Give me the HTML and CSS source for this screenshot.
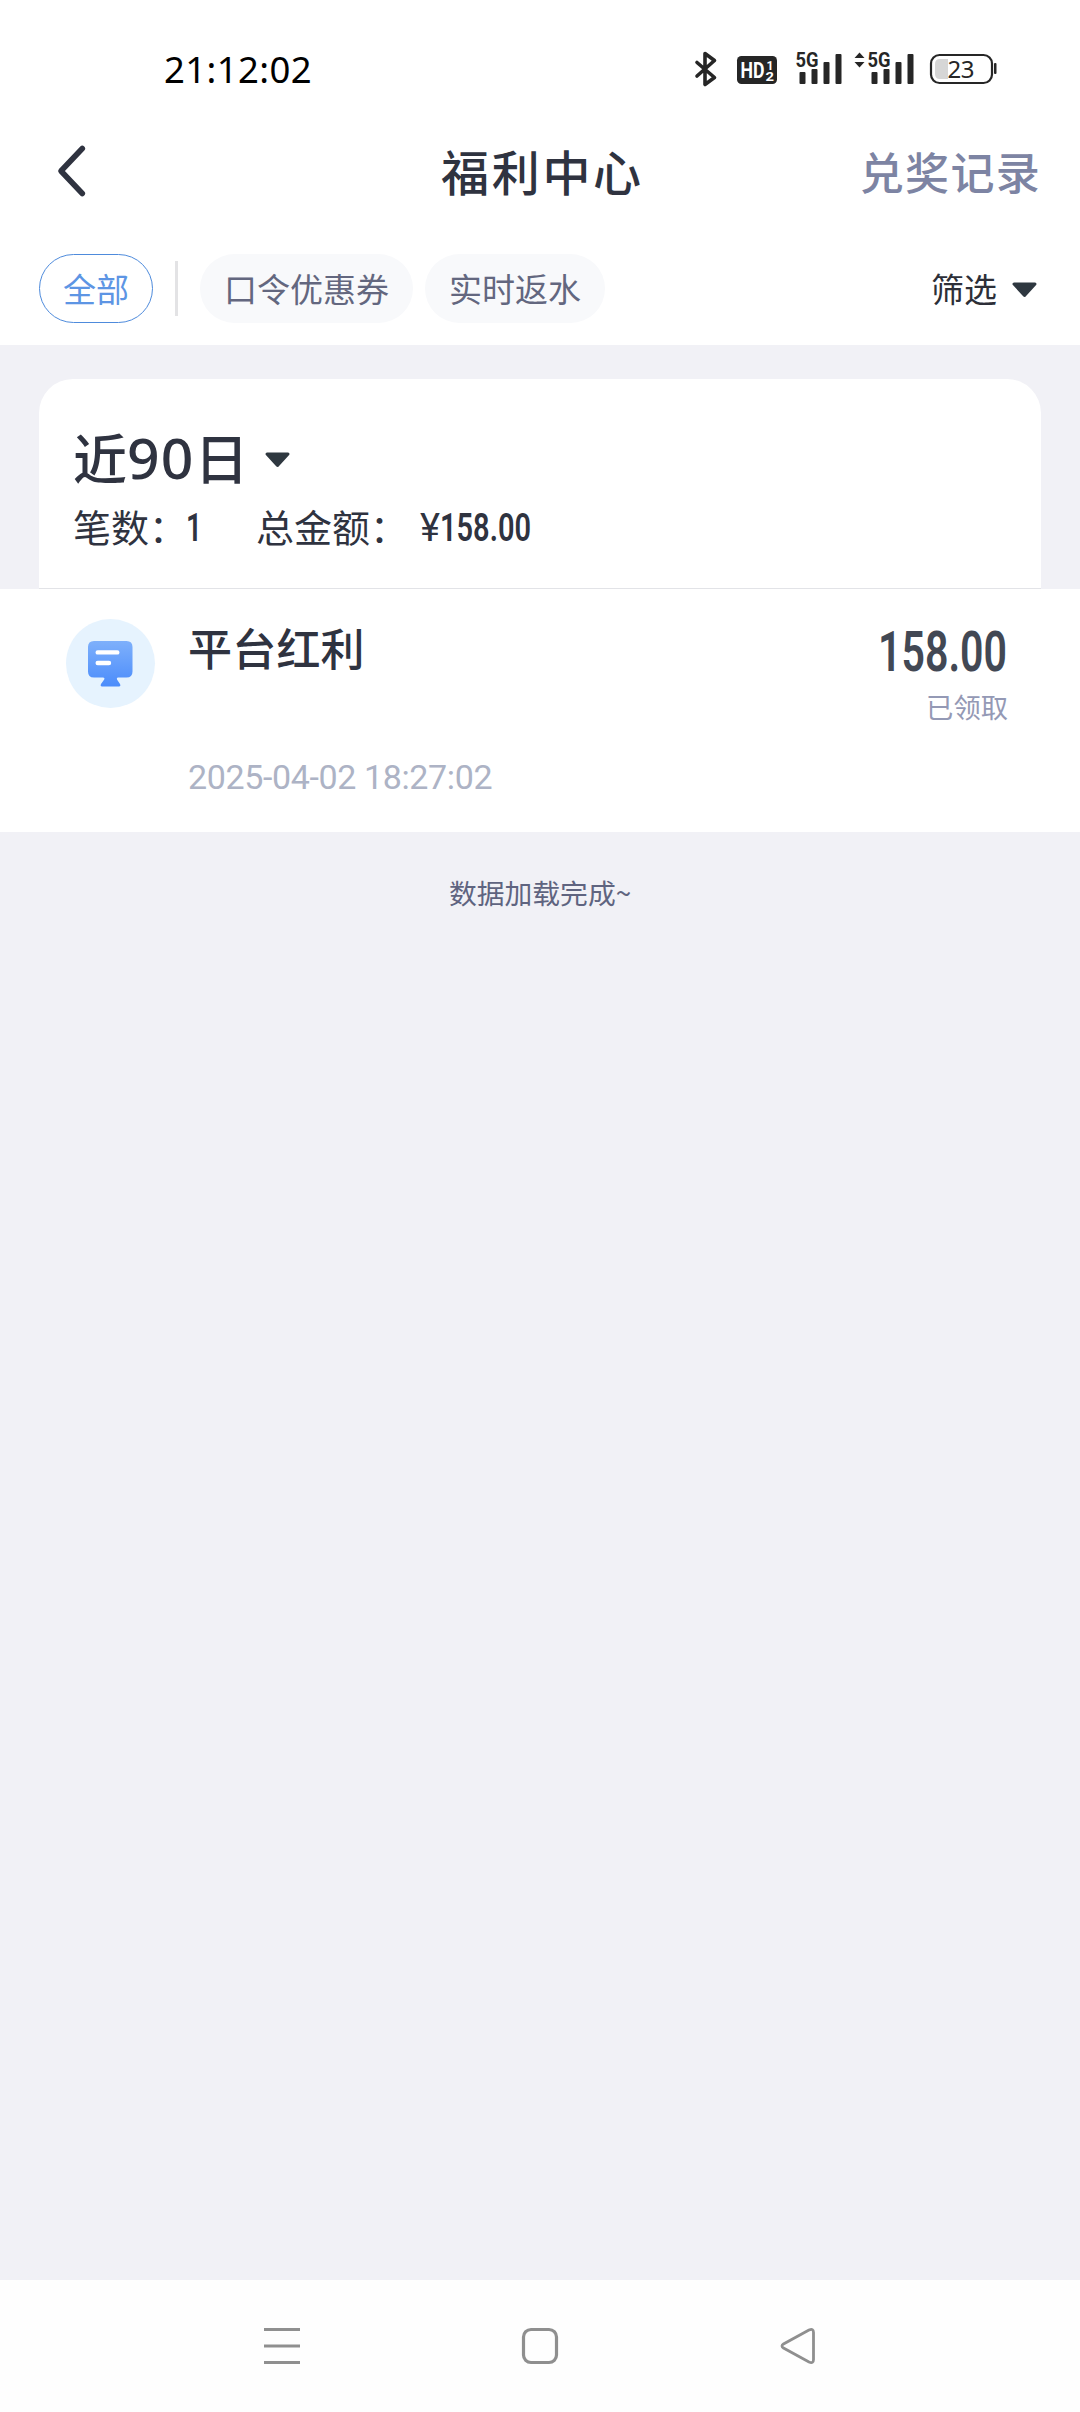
FILE: index.html
```html
<!DOCTYPE html>
<html lang="zh-CN">
<head>
<meta charset="utf-8">
<meta name="viewport" content="width=device-width">
<title>福利中心</title>
<link rel="stylesheet" href="styles.css">
</head>
<body>
<div class="screen">
  <div class="statusbar">
    <span class="clock">21:12:02</span>
    <svg class="status-icons" width="310" height="44" viewBox="690 48 310 44">
      <path class="bt" d="M697 62.500L714.500 77.500L705 84.500V53.500L714.500 60.500L697 76"/>
      <rect x="737" y="56" width="40" height="28" rx="4.500" fill="#262626"/>
      <g fill="#fff">
        <text x="740.500" y="78" font-size="22.500" font-weight="700" textLength="24" lengthAdjust="spacingAndGlyphs">HD</text>
        <text x="766.500" y="69.500" font-size="13" font-weight="700" textLength="7" lengthAdjust="spacingAndGlyphs">1</text>
        <text x="765.500" y="81" font-size="13" font-weight="700" textLength="8.500" lengthAdjust="spacingAndGlyphs">2</text>
      </g>
      <g fill="#262626">
        <text x="795.500" y="67.300" font-size="21" font-weight="700" textLength="23" lengthAdjust="spacingAndGlyphs">5G</text>
        <rect x="799.500" y="72" width="6" height="12" rx="1"/>
        <rect x="811.500" y="69" width="6" height="15" rx="1"/>
        <rect x="823.500" y="62" width="6" height="22" rx="1"/>
        <rect x="835.500" y="54" width="6" height="30" rx="1"/>
        <text x="867.500" y="67.300" font-size="21" font-weight="700" textLength="23" lengthAdjust="spacingAndGlyphs">5G</text>
        <rect x="871.500" y="72" width="6" height="12" rx="1"/>
        <rect x="883.500" y="69" width="6" height="15" rx="1"/>
        <rect x="895.500" y="62" width="6" height="22" rx="1"/>
        <rect x="907.500" y="54" width="6" height="30" rx="1"/>
        <path d="M854.500 58L859.500 52.500L864.500 58ZM854.500 62H864.500L859.500 67.500Z"/>
        <rect x="994" y="63" width="2.500" height="11" rx="1"/>
      </g>
      <path d="M940 59H948V79H940Q935 79 935 74V64Q935 59 940 59Z" fill="#d6d6d6"/>
      <rect x="931" y="55" width="61" height="28" rx="8.500" fill="none" stroke="#262626" stroke-width="2.200"/>
      <text class="charge" x="947.500" y="78.200" font-size="24" textLength="27">23</text>
    </svg>
  </div>

  <header class="navbar">
    <svg class="back" width="32" height="54" viewBox="0 0 32 54"><path d="M27.300 4.500L6 27L27.300 49.500"/></svg>
    <h1 class="title">福利中心</h1>
    <a class="records">兑奖记录</a>
  </header>

  <nav class="filters">
    <span class="chip chip-active">全部</span>
    <span class="divider"></span>
    <span class="chip">口令优惠券</span>
    <span class="chip">实时返水</span>
    <span class="sort">筛选<svg width="25" height="16" viewBox="0 0 25 16"><path class="caret" d="M2 2H23L12.500 13.500Z"/></svg></span>
  </nav>

  <main class="content">
    <section class="summary">
      <div class="range">近<span class="days">90</span>日<svg width="25" height="16" viewBox="0 0 25 16"><path class="caret" d="M2 2H23L12.500 13.500Z"/></svg></div>
      <div class="totals">
        <span class="count-label">笔数：</span>
        <svg class="count" width="16" height="50" viewBox="0 0 16 50"><text x="-1" y="40" font-size="38" textLength="16" lengthAdjust="spacingAndGlyphs">1</text></svg>
        <span class="sum-label">总金额：</span>
        <svg class="sum" width="114" height="50" viewBox="0 0 114 50"><text class="yen" x="0" y="40" font-size="38" textLength="20" lengthAdjust="spacingAndGlyphs">¥</text><text x="20" y="40" font-size="38" textLength="91" lengthAdjust="spacingAndGlyphs">158.00</text></svg>
      </div>
    </section>

    <article class="record">
      <svg class="badge" width="90" height="90" viewBox="66 618 90 90">
        <defs><linearGradient id="screen-fill" x1="0" y1="0" x2="0" y2="1"><stop offset="0" stop-color="#7eb0fb"/><stop offset="1" stop-color="#4b8cfb"/></linearGradient></defs>
        <circle cx="110.500" cy="663.500" r="44.500" fill="#e6f3fe"/>
        <path d="M94 641H126.500Q132.500 641 132.500 647V671.500Q132.500 677.500 126.500 677.500H118Q116.300 677.500 117 679.500L120 684Q121 686.500 119 686.500H102Q100 686.500 101 684L104.200 679.500Q105 677.500 103 677.500H94Q88 677.500 88 671.500V647Q88 641 94 641Z" fill="url(#screen-fill)"/>
        <path d="M97.700 652.400H117.300M97.700 663H109" stroke="#fff" stroke-width="4.400" stroke-linecap="round"/>
      </svg>
      <div class="detail">
        <h2 class="name">平台红利</h2>
        <time class="date">2025-04-02 18:27:02</time>
      </div>
      <div class="result">
        <svg width="130" height="66" viewBox="0 0 130 66"><text class="amount" x="0" y="53" font-size="55" textLength="129" lengthAdjust="spacingAndGlyphs">158.00</text></svg>
        <span class="state">已领取</span>
      </div>
    </article>
    <p class="end">数据加载完成~</p>
  </main>

  <footer class="sysnav">
    <svg width="38" height="40" viewBox="0 0 38 40"><path d="M1 3.500H37M1 20H37M1 36.500H37"/></svg>
    <svg width="38" height="40" viewBox="0 0 38 40"><rect x="2.500" y="3.500" width="33" height="33" rx="7.500"/></svg>
    <svg width="38" height="40" viewBox="0 0 38 40"><path class="thin" d="M30 4.100L4.500 17.900Q1.500 20 4.500 22.100L30 36Q34.500 38 34.500 33.500V6.500Q34.500 2 30 4.100Z"/></svg>
  </footer>
</div>
</body>
</html>
```
FILE: styles.css
```css
* { box-sizing: border-box; }
body {
  margin: 0;
  background: #f1f1f6;
  color: #2f3340;
  font-family: "Noto Sans CJK SC", sans-serif;
}
h1, h2, p { margin: 0; }
svg { display: block; flex: none; overflow: visible; }
svg text { font-family: Roboto, sans-serif; }
.screen { width: 1080px; height: 2412px; display: flex; flex-direction: column; }

.statusbar {
  height: 120px;
  padding: 48px 80px 0 164px;
  display: flex;
  justify-content: space-between;
  background: #fff;
}
.clock { font: 450 36.5px/42px "Noto Sans", sans-serif; letter-spacing: 0.4px; color: #000; white-space: nowrap; }
.bt { fill: none; stroke: #262626; stroke-width: 3.6; stroke-linejoin: round; stroke-linecap: round; }
.status-icons .charge { font-family: "Noto Sans", sans-serif; fill: #262626; }

.navbar {
  height: 106px;
  padding: 0 39px 4px 55px;
  display: grid;
  grid-template-columns: 386px auto 1fr;
  align-items: center;
  background: #fff;
}
.back path { fill: none; stroke: #2f3340; stroke-width: 5.6; stroke-linecap: round; stroke-linejoin: round; }
.title { margin-top: -2px; font-size: 48px; line-height: 60px; font-weight: 500; letter-spacing: 2.7px; }
.records { justify-self: end; font-size: 44px; line-height: 60px; font-weight: 500; letter-spacing: 1.3px; color: #7d84a3; }

.filters {
  height: 119px;
  padding: 28px 43px 22px 39px;
  display: flex;
  align-items: center;
  background: #fff;
}
.chip {
  height: 69px;
  padding: 0 24px;
  border-radius: 35px;
  background: #f8f9fb;
  color: #63677f;
  font-size: 33px;
  line-height: 69px;
  white-space: nowrap;
}
.chip + .chip { margin-left: 12px; }
.chip-active { padding: 0 23px; border: 1px solid #4e8bdc; background: #fff; color: #5d95e4; line-height: 67px; }
.divider { width: 3px; height: 55px; margin: 0 22px; background: #e3e3e5; }
.sort { margin-left: auto; display: flex; align-items: center; gap: 15px; font-size: 33px; line-height: 69px; color: #2d2f38; }
.sort svg { margin-top: 3px; }
.caret { fill: #2f3840; stroke: #2f3840; stroke-width: 3; stroke-linejoin: round; }

.content { flex: 1; padding-top: 34px; }
.summary {
  height: 210px;
  margin: 0 39px;
  padding: 43px 34px 0;
  border-radius: 34px 34px 0 0;
  border-bottom: 1px solid #e2e3e7;
  background: #fff;
}
.range { display: flex; align-items: center; height: 70px; font-size: 54px; line-height: 70px; font-weight: 500; }
.range .days { font-family: "Noto Sans", sans-serif; font-size: 57px; letter-spacing: 1.2px; }
.range svg { margin: 5px 0 0 16px; }
.totals { display: flex; align-items: center; height: 68px; font-size: 38px; line-height: 68px; white-space: nowrap; }
.totals text { font-weight: 600; fill: #2f3340; }
.totals .yen { font-weight: 400; }
.sum-label { margin-left: 53px; }
.sum { margin-left: 12px; }

.record { height: 243px; padding: 29px 72px 0 66px; display: flex; background: #fff; }
.detail { margin-left: 32px; display: flex; flex-direction: column; }
.name { margin-top: -1px; font-size: 44px; line-height: 60px; font-weight: 500; letter-spacing: 0.2px; }
.date { margin-top: 78px; font: 400 34px/44px Roboto, sans-serif; letter-spacing: -0.37px; color: #adb3c5; white-space: nowrap; }
.result { margin-left: auto; display: flex; flex-direction: column; align-items: flex-end; }
.state { margin-top: 2px; font-size: 27.3px; line-height: 40px; color: #9499b5; }
.amount { font-weight: 600; fill: #424854; }
.end { margin-top: 39px; text-align: center; font-size: 27.8px; line-height: 42px; color: #5f6480; }

.sysnav {
  height: 132px;
  padding: 46px 263px 0;
  display: flex;
  justify-content: space-between;
  background: #fefefe;
}
.sysnav svg { fill: none; stroke: #8f8f8f; stroke-width: 3.2; }
.sysnav .thin { stroke-width: 2.8; }
```
